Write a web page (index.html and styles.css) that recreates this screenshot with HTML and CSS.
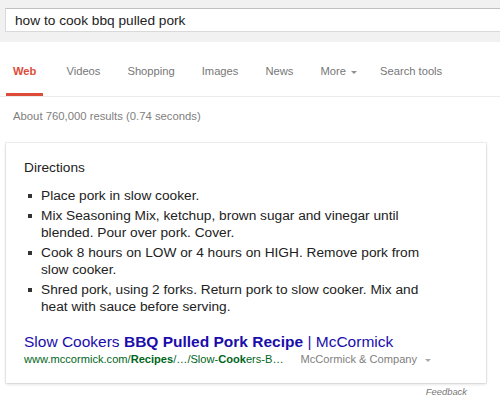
FILE: index.html
```html
<!DOCTYPE html>
<html lang="en">
<head>
  <meta charset="UTF-8">
  <title>how to cook bbq pulled pork - Search</title>
  <link rel="stylesheet" href="styles.css">
</head>
<body>
  <div class="top-bar">
    <div class="search-box">how to cook bbq pulled pork</div>
  </div>

  <div class="tabs">
    <span class="tab active">Web</span>
    <span class="tab">Videos</span>
    <span class="tab">Shopping</span>
    <span class="tab">Images</span>
    <span class="tab">News</span>
    <span class="tab">More <i class="caret"></i></span>
    <span class="tab last">Search tools</span>
  </div>

  <div class="stats">About 760,000 results (0.74 seconds)</div>

  <div class="card">
    <div class="card-title">Directions</div>
    <ul class="steps">
      <li>Place pork in slow cooker.</li>
      <li>Mix Seasoning Mix, ketchup, brown sugar and vinegar until blended. Pour over pork. Cover.</li>
      <li>Cook 8 hours on LOW or 4 hours on HIGH. Remove pork from slow cooker.</li>
      <li>Shred pork, using 2 forks. Return pork to slow cooker. Mix and heat with sauce before serving.</li>
    </ul>
    <a class="result-link" href="#">Slow Cookers <b>BBQ Pulled Pork Recipe</b> | McCormick</a>
    <div class="result-meta">
      <span class="url">www.mccormick.com/<b>Recipes</b>/…/Slow-<b>Cook</b>ers-B…</span>
      <span class="source">McCormick &amp; Company <i class="caret"></i></span>
    </div>
  </div>

  <div class="feedback">Feedback</div>
</body>
</html>
```

FILE: styles.css
```css
body {
  margin: 0;
  font-family: "Liberation Sans", Arial, sans-serif;
  background: #fff;
  color: #222;
  overflow: hidden;
}

.top-bar {
  background: #f1f1f1;
  height: 42px;
  padding: 8px 0 0 5px;
  box-sizing: border-box;
}

.search-box {
  background: #fff;
  border: 1px solid #d9d9d9;
  border-top-color: #c0c0c0;
  border-right: none;
  height: 24px;
  line-height: 24px;
  padding-left: 9px;
  font-size: 13.7px;
  color: #222;
  box-sizing: border-box;
}

.tabs {
  display: flex;
  gap: 13px;
  padding-left: 6px;
  border-bottom: 1px solid #ebebeb;
}

.tab {
  padding: 21px 7px 14px;
  line-height: 16px;
  font-size: 11.2px;
  color: #777;
  white-space: nowrap;
  border-bottom: 3px solid transparent;
}

.tab.active {
  margin-right: 3px;
  color: #dd4b39;
  font-weight: bold;
  border-bottom-color: #dd4b39;
}

.tab.last {
  margin-left: -4px;
}

.caret {
  display: inline-block;
  width: 0;
  height: 0;
  margin-left: 2px;
  vertical-align: middle;
  border-left: 3px solid transparent;
  border-right: 3px solid transparent;
  border-top: 3px solid #909090;
}

.stats {
  margin-top: 11px;
  padding-left: 13px;
  line-height: 16px;
  font-size: 11.3px;
  color: #808080;
}

.card {
  margin: 19px 0 0 6px;
  width: 480px;
  padding: 16px 52px 16px 18px;
  box-sizing: border-box;
  background: #fff;
  box-shadow: 0 1px 3px rgba(0, 0, 0, 0.16), 0 0 0 1px rgba(0, 0, 0, 0.05);
}

.card-title {
  font-size: 13.7px;
  line-height: 18px;
  color: #222;
}

.steps {
  list-style: none;
  margin: 10px 0 0;
  padding: 0 0 0 17px;
}

.steps li {
  position: relative;
  font-size: 13.7px;
  line-height: 17px;
  margin-bottom: 3px;
  color: #222;
}

.steps li::before {
  content: "";
  position: absolute;
  left: -13px;
  top: 7px;
  width: 4px;
  height: 4px;
  background: #333;
}

.result-link {
  display: block;
  margin-top: 17px;
  font-size: 15.5px;
  line-height: 20px;
  color: #1a0dab;
  text-decoration: none;
}

.result-meta {
  display: flex;
  gap: 17px;
  font-size: 11.1px;
  line-height: 15px;
  white-space: nowrap;
}

.url {
  color: #006621;
}

.source {
  color: #808080;
}

.source .caret {
  margin-left: 5px;
  border-top-color: #aaa;
}

.feedback {
  margin-top: 3px;
  padding-right: 33px;
  text-align: right;
  font-size: 9.4px;
  line-height: 12px;
  font-style: italic;
  color: #777;
}
```
